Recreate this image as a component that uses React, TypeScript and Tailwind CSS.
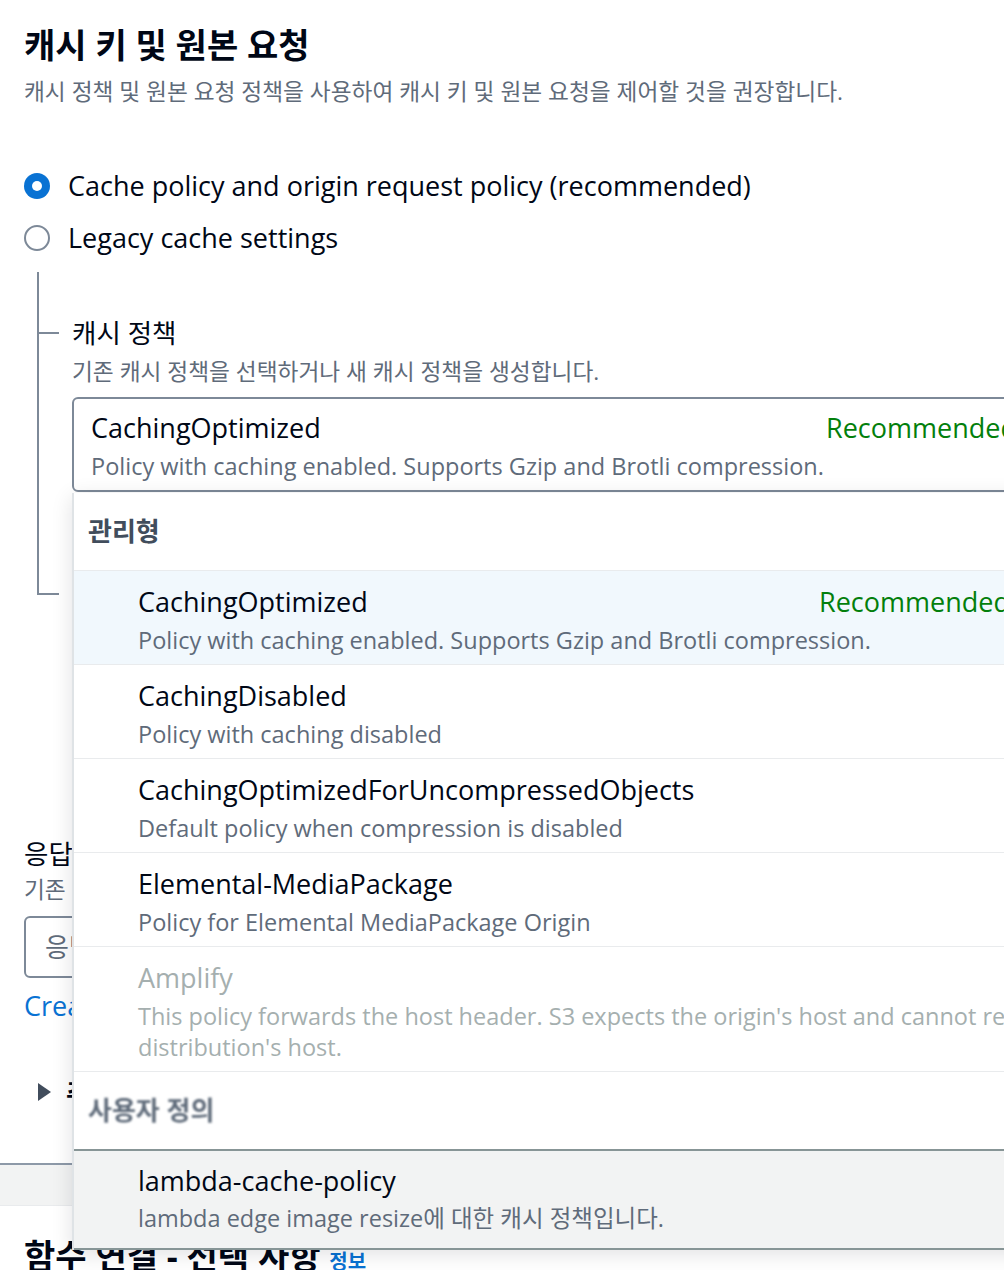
import React from 'react';

const font = "font-['Open_Sans','Noto_Sans_CJK_KR',sans-serif]";

interface PolicyOption {
  name: string;
  desc: string[];
  recommended?: boolean;
  highlighted?: boolean;
  disabled?: boolean;
}

const managed: PolicyOption[] = [
  {
    name: 'CachingOptimized',
    desc: ['Policy with caching enabled. Supports Gzip and Brotli compression.'],
    recommended: true,
    highlighted: true,
  },
  { name: 'CachingDisabled', desc: ['Policy with caching disabled'] },
  {
    name: 'CachingOptimizedForUncompressedObjects',
    desc: ['Default policy when compression is disabled'],
  },
  { name: 'Elemental-MediaPackage', desc: ['Policy for Elemental MediaPackage Origin'] },
  {
    name: 'Amplify',
    desc: [
      "This policy forwards the host header. S3 expects the origin's host and cannot resolve the",
      "distribution's host.",
    ],
    disabled: true,
  },
];

const Radio: React.FC<{ checked?: boolean; label: string }> = ({ checked, label }) => (
  <label className="flex items-center h-[36px]">
    {checked ? (
      <span className="w-[26px] h-[26px] rounded-full bg-[#0972d3] flex items-center justify-center shrink-0">
        <span className="w-[10px] h-[10px] rounded-full bg-white" />
      </span>
    ) : (
      <span className="w-[26px] h-[26px] rounded-full border-2 border-[#7d8998] shrink-0" />
    )}
    <span className="ml-[18px] text-[27px] text-[#000716] whitespace-nowrap">{label}</span>
  </label>
);

const OptionRow: React.FC<{ opt: PolicyOption }> = ({ opt }) => {
  const titleColor = opt.disabled ? 'text-[#a5afaf]' : 'text-[#000716]';
  const descColor = opt.disabled ? 'text-[#a5afaf]' : 'text-[#5f6b7a]';
  return (
    <div
      className={`border-b border-[#e9ebed] pl-[64px] pt-[16px] pb-[8px] ${opt.highlighted ? 'bg-[#f1f8fd]' : 'bg-white'}`}
    >
      <div className="flex items-center h-[30px]">
        <span className={`w-[681px] shrink-0 text-[27px] whitespace-nowrap ${titleColor}`}>{opt.name}</span>
        {opt.recommended && (
          <span className="text-[27px] text-[#037f0c] whitespace-nowrap">Recommended</span>
        )}
      </div>
      <div className="mt-[8px]">
        {opt.desc.map((line) => (
          <div key={line} className={`text-[23.5px] leading-[31px] whitespace-nowrap ${descColor}`}>
            {line}
          </div>
        ))}
      </div>
    </div>
  );
};

const Dropdown: React.FC = () => (
  <div className="absolute left-0 top-[calc(100%+1px)] w-[1000px] bg-white border-l-2 border-[#dfe3e6] shadow-[0_4px_20px_rgba(0,7,22,0.12)] z-10">
    <div className="h-[78px] flex items-center pl-[14px] border-b border-[#e9ebed]">
      <span className="text-[26px] font-bold text-[#414d5c]">관리형</span>
    </div>
    {managed.map((opt) => (
      <OptionRow key={opt.name} opt={opt} />
    ))}
    <div className="h-[77px] flex items-center pl-[14px]">
      <span className="text-[26px] font-bold text-[#5f6b7a] blur-[1px]">사용자 정의</span>
    </div>
    <div className="bg-[#f2f3f3] border-y-2 border-[#879596] pl-[64px] pt-[15px] pb-[14px]">
      <div className="h-[30px] flex items-center text-[27px] text-[#000716] whitespace-nowrap">
        lambda-cache-policy
      </div>
      <div className="mt-[7px] text-[23.5px] leading-[31px] text-[#5f6b7a] whitespace-nowrap">
        lambda edge image resize에 대한 캐시 정책입니다.
      </div>
    </div>
  </div>
);

export default function App() {
  return (
    <div className={`w-full h-[1270px] overflow-hidden bg-white ${font}`}>
      <div className="bg-white pl-[24px] pt-[25px] border-b-2 border-[#8d99a8]">
        <h2 className="text-[34px] leading-[40px] font-bold text-[#000716] whitespace-nowrap">
          캐시 키 및 원본 요청
        </h2>
        <p className="mt-[12px] text-[22.7px] leading-[30px] text-[#5f6b7a] whitespace-nowrap">
          캐시 정책 및 원본 요청 정책을 사용하여 캐시 키 및 원본 요청을 제어할 것을 권장합니다.
        </p>

        <div className="mt-[61px] flex flex-col gap-[16px]">
          <Radio checked label="Cache policy and origin request policy (recommended)" />
          <Radio label="Legacy cache settings" />
        </div>

        {/* nested cache policy field */}
        <div className="mt-[16px] ml-[13px] border-l-2 border-[#7d8998] pt-[45px] flex flex-col">
          <div className="flex">
            <div className="w-[20px] h-[32px] flex items-center shrink-0">
              <div className="w-[20px] h-[2px] bg-[#7d8998]" />
            </div>
            <div className="ml-[13px] flex-1">
              <div className="text-[26.5px] leading-[32px] text-[#000716] whitespace-nowrap">캐시 정책</div>
              <div className="mt-[8px] text-[22.7px] leading-[30px] text-[#5f6b7a] whitespace-nowrap">
                기존 캐시 정책을 선택하거나 새 캐시 정책을 생성합니다.
              </div>
              <div className="relative mt-[10px] w-[960px]">
                <div className="border-2 border-[#7d8998] rounded-[6px] pl-[17px] pt-[14px] pb-[8px] bg-white">
                  <div className="flex items-center h-[30px]">
                    <span className="w-[735px] shrink-0 text-[27px] text-[#000716] whitespace-nowrap">
                      CachingOptimized
                    </span>
                    <span className="text-[27px] text-[#037f0c] whitespace-nowrap">Recommended</span>
                  </div>
                  <div className="mt-[8px] text-[23.5px] leading-[31px] text-[#5f6b7a] whitespace-nowrap">
                    Policy with caching enabled. Supports Gzip and Brotli compression.
                  </div>
                </div>
                <Dropdown />
              </div>
              <div className="h-[101px]" />
            </div>
          </div>
          <div className="w-[20px] h-[2px] bg-[#7d8998]" />
        </div>

        {/* response headers policy field (mostly hidden behind the menu) */}
        <div className="mt-[243px]">
          <div className="text-[26.5px] leading-[32px] text-[#000716] whitespace-nowrap">
            응답 헤더 정책 - 선택 사항
          </div>
          <div className="mt-[5px] text-[22.7px] leading-[30px] text-[#5f6b7a] whitespace-nowrap">
            기존 응답 헤더 정책을 선택하거나 새 응답 헤더 정책을 생성합니다.
          </div>
          <div className="mt-[11px] w-[600px] h-[62px] border-2 border-[#7d8998] rounded-[6px] flex items-center pl-[19px]">
            <span className="text-[26px] text-[#5f6b7a] whitespace-nowrap">응답 헤더 정책 선택</span>
          </div>
          <div className="mt-[13px] text-[27px] leading-[30px] text-[#0972d3] whitespace-nowrap">
            Create response headers policy
          </div>
        </div>

        <div className="mt-[51px] h-[40px] flex items-center pl-[12px]">
          <svg width="16" height="20" viewBox="0 0 16 20">
            <path d="M2 1 L15 10 L2 19 Z" fill="#414d5c" />
          </svg>
          <span className="ml-[14px] text-[26px] font-bold text-[#000716]">추가 설정</span>
        </div>
        <div className="h-[51px]" />
      </div>

      <div className="h-[40px] bg-[#f2f3f3]" />

      <div className="bg-white border-t border-[#e9ebed] pl-[24px] pt-[30px]">
        <h2 className="text-[34px] leading-[40px] font-bold text-[#000716] whitespace-nowrap">
          함수 연결 - 선택 사항 <span className="text-[20px] font-bold text-[#0972d3]">정보</span>
        </h2>
      </div>
    </div>
  );
}
